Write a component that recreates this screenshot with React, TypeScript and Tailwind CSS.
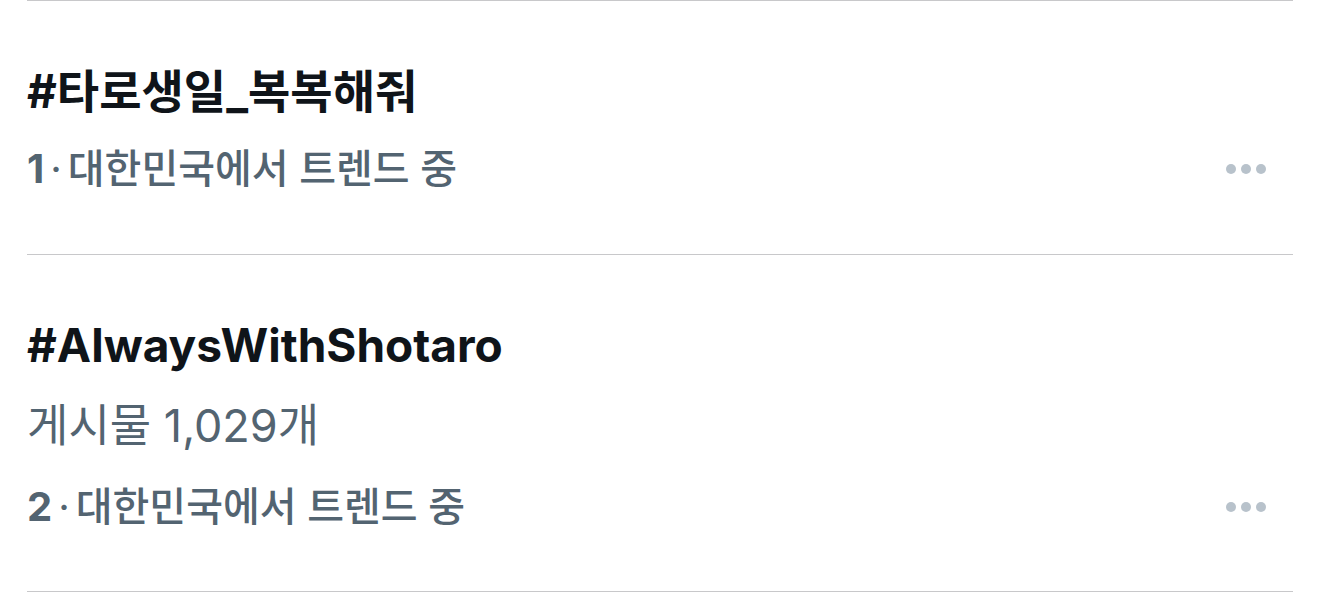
const font = { fontFamily: 'Inter, "Noto Sans CJK KR", sans-serif' };

function Dots() {
  return (
    <div className="flex items-center gap-[5px]">
      <span className="block w-[10px] h-[10px] rounded-full bg-[#b8c2cb]" />
      <span className="block w-[10px] h-[10px] rounded-full bg-[#b8c2cb]" />
      <span className="block w-[10px] h-[10px] rounded-full bg-[#b8c2cb]" />
    </div>
  );
}

interface TrendProps {
  rank: number;
  title: string;
  posts?: string;
}

function Trend({ rank, title, posts }: TrendProps) {
  return (
    <div className="border-b border-[#c8c8ca] pt-[58px] pb-[45px]">
      <div className="text-[46px] leading-[64px] font-bold text-[#0f1419]">{title}</div>
      {posts && (
        <div className="text-[45px] leading-[80px] text-[#536471] mt-[9px]">{posts}</div>
      )}
      <div className={"flex items-center justify-between " + (posts ? "mt-[1px] mb-[-1px]" : "mt-[6px]")}>
        <div className="text-[40px] leading-[80px] text-[#536471] font-medium">
          <span className="font-bold">{rank}</span>
          <span className="font-normal mx-[6px]">·</span>
          대한민국에서 트렌드 중
        </div>
        <div className="mr-[27px]">
          <Dots />
        </div>
      </div>
    </div>
  );
}

export default function App() {
  return (
    <div className="w-[1320px] h-[601px] bg-white overflow-hidden" style={font}>
      <div className="mx-[27px] border-t border-[#c8c8ca]">
        <Trend rank={1} title="#타로생일_복복해줘" />
        <Trend rank={2} title="#AlwaysWithShotaro" posts="게시물 1,029개" />
      </div>
    </div>
  );
}
